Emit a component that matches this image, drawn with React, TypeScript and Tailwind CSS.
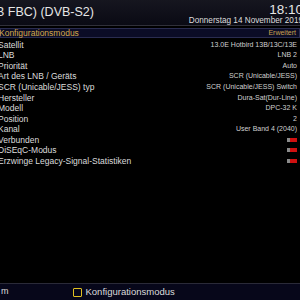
import React from "react";

type Row = { label: string; value?: string; toggle?: boolean };

const rows: Row[] = [
  { label: "Satellit", value: "13.0E Hotbird 13B/13C/13E" },
  { label: "LNB", value: "LNB 2" },
  { label: "Priorität", value: "Auto" },
  { label: "Art des LNB / Geräts", value: "SCR (Unicable/JESS)" },
  { label: "SCR (Unicable/JESS) typ", value: "SCR (Unicable/JESS) Switch" },
  { label: "Hersteller", value: "Dura-Sat(Dur-Line)" },
  { label: "Modell", value: "DPC-32 K" },
  { label: "Position", value: "2" },
  { label: "Kanal", value: "User Band 4 (2040)" },
  { label: "Verbunden", toggle: true },
  { label: "DiSEqC-Modus", toggle: true },
  { label: "Erzwinge Legacy-Signal-Statistiken", toggle: true },
];

function Toggle() {
  return (
    <div className="flex h-[4px] w-[10px]">
      <div className="w-[3px] bg-[#8a8a8a]" />
      <div className="flex-1 bg-[#d01010]" />
    </div>
  );
}

export default function App() {
  return (
    <div
      className="flex h-[300px] w-[300px] flex-col overflow-hidden bg-black text-[#dcdcdc]"
      style={{ fontFamily: '"Liberation Sans", Arial, sans-serif' }}
    >
      <div className="flex h-[25px] items-start justify-between bg-gradient-to-b from-[#16161f] to-[#0a0a14]">
        <div className="-ml-[4px] pt-[5px] text-[12.5px] leading-[14px] text-[#e6e6e6]">B FBC) (DVB-S2)</div>
        <div className="-mr-[3px] flex flex-col items-end">
          <div className="pt-[3px] text-[13.5px] leading-[13px] text-[#e6e6e6]">18:10</div>
          <div className="text-[8.2px] leading-[9px] text-[#dcdcdc]">Donnerstag 14 November 2019</div>
        </div>
      </div>
      <div className="h-[1px] bg-[#30303a]" />
      <div className="h-[2px]" />
      <div className="flex h-[10px] items-center justify-between border border-[#2a2c50] bg-[#0b0c26] pr-[3px]">
        <span className="-ml-[2px] text-[8.5px] leading-[10px] text-[#d4a94a]">Konfigurationsmodus</span>
        <span className="text-[7px] leading-[10px] text-[#c8a050]">Erweitert</span>
      </div>
      <div className="flex flex-col pt-[1.5px]">
        {rows.map((r) => (
          <div key={r.label} className="flex h-[10.55px] items-center justify-between pr-[3px]">
            <span className="-ml-[2px] text-[8.5px] leading-[10px] text-[#dcdcdc]">{r.label}</span>
            {r.toggle ? (
              <Toggle />
            ) : (
              <span className="text-[7px] leading-[10px] text-[#d0d0d0]">{r.value}</span>
            )}
          </div>
        ))}
      </div>
      <div className="flex-1" />
      <div className="h-[1px] bg-[#2a2a38]" />
      <div className="flex h-[16px] items-center bg-[#07071a]">
        <span className="ml-[1px] text-[9px] text-[#dcdcdc]">m</span>
        <div className="ml-[64px] h-[9px] w-[9px] rounded-[1px] border border-[#e0c020]" />
        <span className="ml-[4px] text-[9.5px] text-[#dcdcdc]">Konfigurationsmodus</span>
      </div>
    </div>
  );
}
